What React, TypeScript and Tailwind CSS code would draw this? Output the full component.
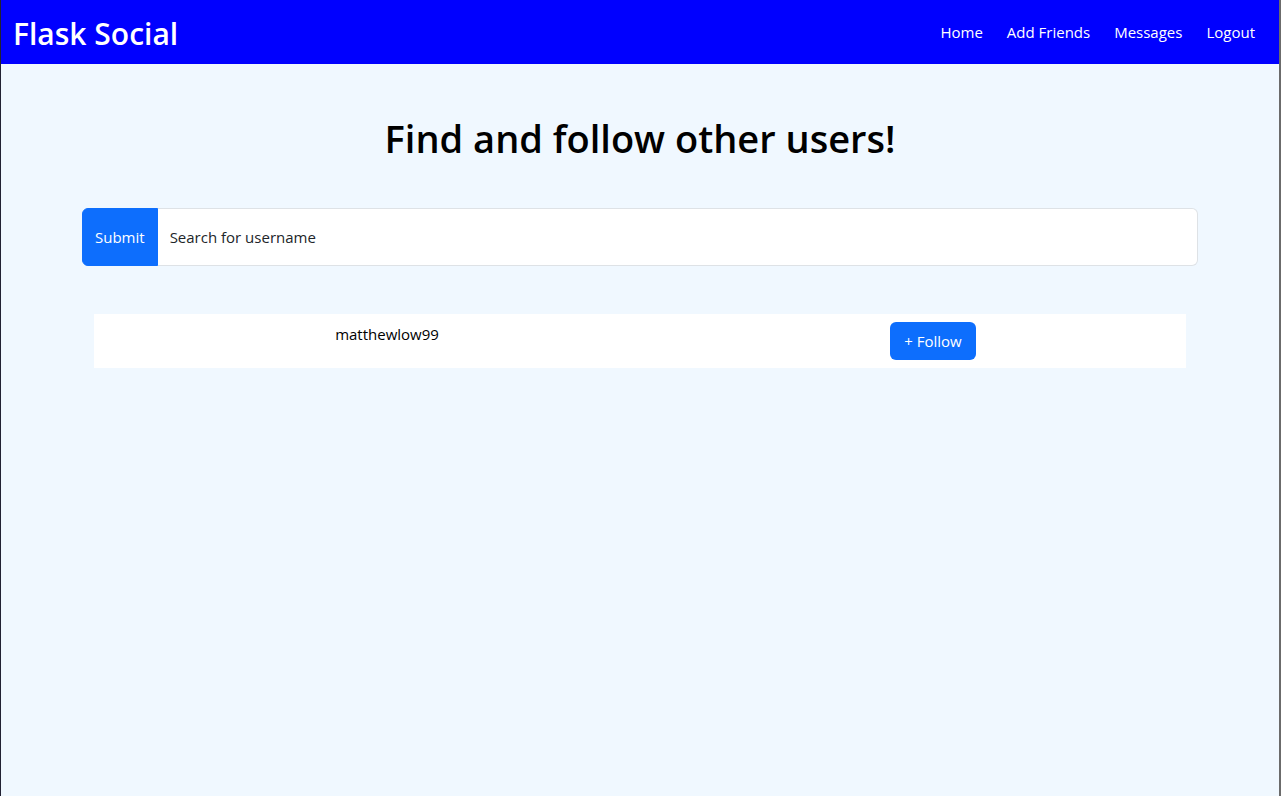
const links = ["Home", "Add Friends", "Messages", "Logout"];

export default function App() {
  return (
    <div className="min-h-screen border-l border-r-2 border-l-[#222233] border-r-[#6b6b6b] bg-[#f0f8ff] font-['Open_Sans',sans-serif] text-[15px] leading-6 text-black">
      <header className="flex h-16 items-center justify-between bg-[#0000ff] px-3 text-white">
        <a href="#" className="pt-1 text-[30px] font-semibold leading-10">Flask Social</a>
        <nav className="flex">
          {links.map((l) => (
            <a key={l} href="#" className="px-3 py-2">{l}</a>
          ))}
        </nav>
      </header>
      <main className="mx-auto max-w-[1140px] px-3">
        <h1 className="pt-[50px] pb-[46px] text-center text-[38px] font-semibold leading-12">Find and follow other users!</h1>
        <form className="flex h-[58px]" onSubmit={(e) => e.preventDefault()}>
          <button type="submit" className="rounded-l-md border border-[#0d6efd] bg-[#0d6efd] px-3 text-white">Submit</button>
          <input
            type="text"
            aria-label="Search for username"
            placeholder="Search for username"
            className="min-w-0 flex-1 rounded-r-md border border-l-0 border-[#dee2e6] bg-white px-3 placeholder:text-[#212529]"
          />
        </form>
        <ul className="mx-3 mt-12 bg-white">
          <li className="grid grid-cols-2 py-2 text-center">
            <p className="pl-10">matthewlow99</p>
            <div className="pl-10">
              <button type="button" className="h-[38px] rounded-md bg-[#0d6efd] px-[14px] text-white">+ Follow</button>
            </div>
          </li>
        </ul>
      </main>
    </div>
  );
}
